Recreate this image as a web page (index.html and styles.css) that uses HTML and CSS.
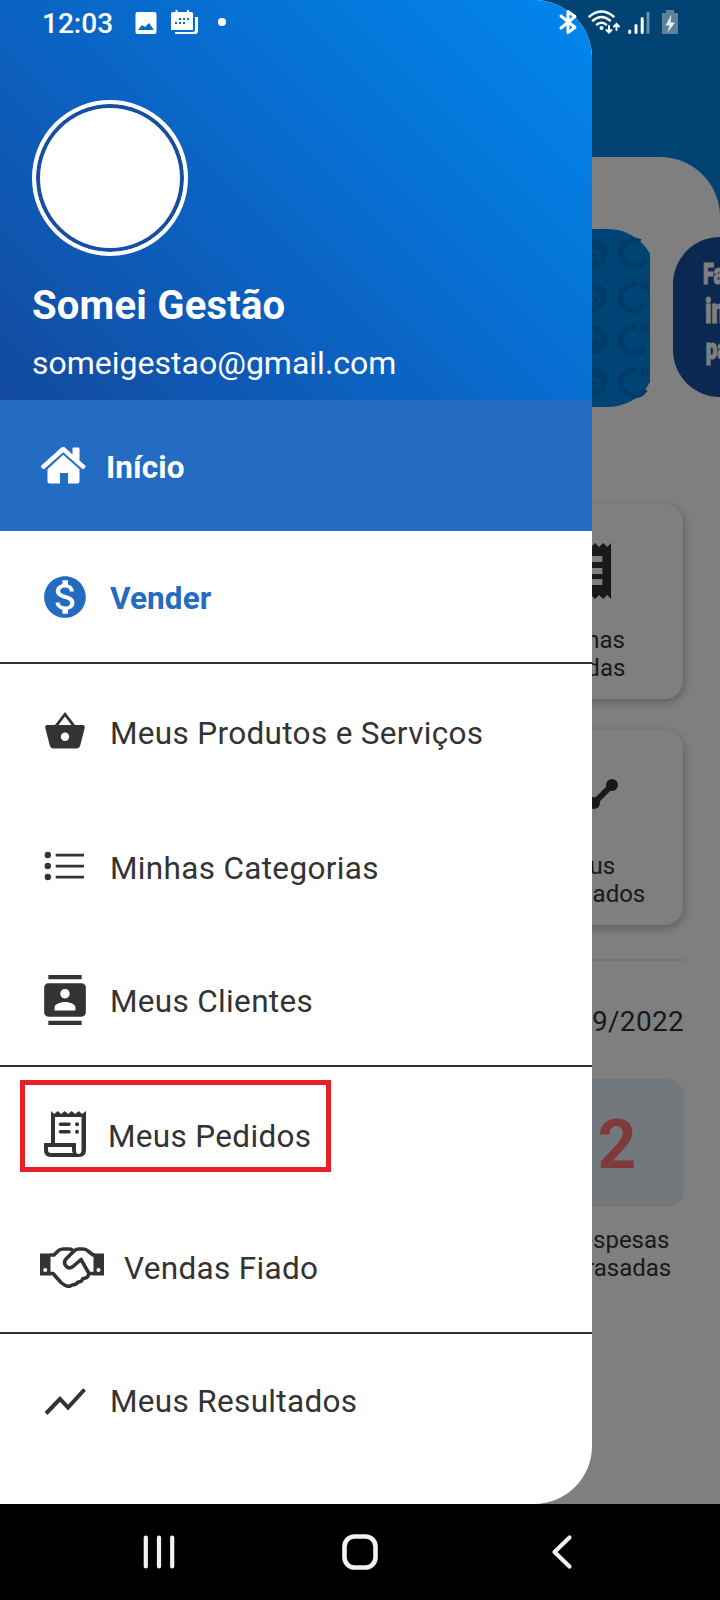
FILE: index.html
```html
<!DOCTYPE html>
<html lang="pt-BR">
<head>
<meta charset="utf-8">
<title>Somei Gestão</title>
<link rel="stylesheet" href="styles.css">
</head>
<body>
<div class="screen">
  <main class="home">
    <div class="sheet">
      <div class="banners">
        <div class="banner-slot">
          <svg class="banner" width="200" height="178" viewBox="456 229 200 178">
            <rect x="456" y="229" width="200" height="178" rx="48" fill="#0089ec"/>
            <g fill="none" stroke="#0078d4" stroke-width="6">
              <circle cx="592" cy="254" r="12"/><circle cx="592" cy="297" r="12"/><circle cx="592" cy="340" r="12"/><circle cx="592" cy="382" r="12"/>
              <path d="M645 260a13 13 0 1 1-5-18M645 304a13 13 0 1 1-8-19M645 347a13 13 0 1 1-8-19M645 389a13 13 0 1 1-8-19"/>
              <path d="M598 249c-8-6-14 3-6 5s3 10-6 5M598 292c-8-6-14 3-6 5s3 10-6 5M598 335c-8-6-14 3-6 5s3 10-6 5M598 377c-8-6-14 3-6 5s3 10-6 5" stroke-width="3"/>
            </g>
            <g fill="#0078d4"><circle cx="645" cy="286" r="5"/><circle cx="645" cy="329" r="5"/><circle cx="645" cy="372" r="5"/></g>
          </svg>
        </div>
        <div class="promo"><span class="p1">Fa</span><span class="p2">in</span><span class="p3">pa</span></div>
      </div>
      <div class="tiles">
        <section class="card">
          <svg width="50" height="58" viewBox="0 0 52 58" preserveAspectRatio="none"><path fill="#333" fill-rule="evenodd" d="M1 1l4 4 4.200-4 4.200 4 4.200-4 4.200 4 4.200-4 4.200 4 4.200-4 4.200 4 4.200-4 4.200 4 4-4v56l-4-4-4.200 4-4.200-4-4.200 4-4.200-4-4.200 4-4.200-4-4.200 4-4.200-4-4.200 4-4.200-4-4 4zM10 14v6h32v-6zM10 26v6h32v-6zM10 37v6h32v-6z"/></svg>
          <p>Minhas<br>Vendas</p>
        </section>
        <section class="card">
          <svg width="62" height="58" viewBox="0 3 62 58"><path d="M6 42l18-18 14 14 18-18" fill="none" stroke="#333" stroke-width="6"/><g fill="#333"><circle cx="6" cy="42" r="6"/><circle cx="24" cy="24" r="6"/><circle cx="38" cy="38" r="6"/><circle cx="56" cy="20" r="6"/></g></svg>
          <p>Meus<br>Resultados</p>
        </section>
      </div>
      <div class="rule"></div>
      <div class="date">09/2022</div>
      <div class="late"><div class="count">2</div><p>Despesas<br>Atrasadas</p></div>
    </div>
  </main>
  <div class="scrim"></div>

  <aside class="drawer">
    <header class="profile">
      <div class="avatar"></div>
      <div class="name">Somei Gestão</div>
      <div class="mail">someigestao@gmail.com</div>
    </header>
    <nav class="menu">
      <a class="item active">
        <svg class="icon" width="46" height="38" viewBox="-.500 .500 46 38" fill="currentColor"><path d="M20.600 1.300a3.200 3.200 0 0 1 4.200 0L32 8V2q0-1 1-1h5q1 0 1 1v12l5.600 5q1 1 0 2l-1 1.200q-1 .8-2 0L22.700 5.800 4 22.200q-1 .8-2 0L.9 21q-1-1 0-2z"/><path d="M22.700 8.300 39 22.800V35q0 2-2 2H27.500V26.500h-8V37H9q-2 0-2-2V22.800z"/></svg>
        <span>Início</span>
      </a>
      <a class="item sell">
        <svg class="icon" width="50" height="50" viewBox="0 0 24 24" fill="currentColor"><path d="M12 2C6.480 2 2 6.480 2 12s4.480 10 10 10 10-4.480 10-10S17.520 2 12 2zm1.410 16.090V20h-2.670v-1.930c-1.710-.36-3.160-1.460-3.270-3.400h1.960c.1 1.050.82 1.870 2.650 1.870 1.960 0 2.400-.98 2.400-1.590 0-.83-.44-1.610-2.670-2.140-2.480-.6-4.180-1.620-4.180-3.670 0-1.720 1.390-2.840 3.110-3.210V4h2.670v1.950c1.860.45 2.790 1.860 2.850 3.390H14.300c-.05-1.110-.64-1.870-2.220-1.870-1.500 0-2.400.68-2.400 1.640 0 .84.65 1.390 2.670 1.910s4.180 1.390 4.180 3.910c-.01 1.830-1.380 2.830-3.120 3.160z"/></svg>
        <span>Vender</span>
      </a>
      <hr>
      <a class="item">
        <svg class="icon" width="50" height="50" viewBox="0 0 50 50" fill="currentColor"><path fill-rule="evenodd" d="M7.500 19H15L25 6l10 13h7.500q2.800 0 2.200 3l-4.500 17.500Q39.400 42.500 36.500 42.500h-23Q10.600 42.500 9.800 39.500L5.300 22q-.6-3 2.200-3zM18.500 19h13L25 10.500zM25 26.500a4.200 4.200 0 1 0 0 8.400 4.200 4.200 0 0 0 0-8.400z"/></svg>
        <span>Meus Produtos e Serviços</span>
      </a>
      <a class="item categories">
        <svg class="icon" width="50" height="50" viewBox="0 0 50 50" fill="currentColor"><circle cx="7.800" cy="14" r="3.200"/><circle cx="7.800" cy="25" r="3.200"/><circle cx="7.800" cy="36" r="3.200"/><path d="M15.700 12.700H44v2.700H15.700zM15.700 23.700H44v2.700H15.700zM15.700 34.700H44v2.700H15.700z"/></svg>
        <span>Minhas Categorias</span>
      </a>
      <a class="item clients">
        <svg class="icon" width="50" height="50" viewBox="0 0 24 24" fill="currentColor"><path d="M20 0H4v2h16V0zM4 24h16v-2H4v2zM20 4H4c-1.100 0-2 .9-2 2v12c0 1.100.9 2 2 2h16c1.100 0 2-.9 2-2V6c0-1.100-.9-2-2-2zm-8 2.750c1.240 0 2.250 1.010 2.250 2.250s-1.010 2.250-2.250 2.250S9.750 10.240 9.750 9 10.760 6.750 12 6.750zM17 17H7v-1.500c0-1.670 3.330-2.500 5-2.500s5 .83 5 2.500V17z"/></svg>
        <span>Meus Clientes</span>
      </a>
      <hr>
      <a class="item orders">
        <svg class="icon" width="50" height="50" viewBox="0 1 50 50"><path d="M11 3l3.200 3 3.500-3 3.500 3 3.500-3 3.500 3 3.500-3 3.500 3 3.500-3 3.500 3L46 3v39q0 7-7 7H11q-7 0-7-7v-7h7zM15 9v26h21v8q0 3 2.500 3t3-3V9zM8 39v3q0 3 3 3h22q-1-1-1-3v-3z" fill="currentColor" fill-rule="evenodd"/><path d="M20.500 16.300h8.500M20.500 23.700h8.500" stroke="currentColor" stroke-width="3.500" stroke-linecap="round"/><circle cx="37" cy="16.300" r="2" fill="currentColor"/><circle cx="37" cy="23.700" r="2" fill="currentColor"/></svg>
        <span>Meus Pedidos</span>
        <i class="highlight"></i>
      </a>
      <a class="item credit">
        <svg class="icon" width="64" height="42" viewBox="0 -.500 64 42"><path fill="currentColor" fill-rule="evenodd" d="M0 7h10.500v22H0zM5.200 21.500a2 2 0 1 0 0 4 2 2 0 0 0 0-4zM53.500 7H64v22H53.500zM58.500 21.500a2 2 0 1 0 0 4 2 2 0 0 0 0-4z"/><path d="M10 8.500h4l4-4Q20 2.500 23 2.500h6q2 0 3.500 1M10 27h3l8 9q7 6 11 2.500 4 0 6-3 4 0 5-3.500 5 0 6-5L41 13l-4 3.500-4 3.500q-4 3-7-.5-3-3.500 0-7l7-7q2.500-3 6-3h4q3 0 5 2l5 4h2M49 27h5" fill="none" stroke="currentColor" stroke-width="3.600" stroke-linejoin="round"/></svg>
        <span>Vendas Fiado</span>
      </a>
      <hr>
      <a class="item results">
        <svg class="icon" width="50" height="50" viewBox="0 0 50 50"><path d="M6 38.500 20 24l8 8.500 16.500-18" fill="none" stroke="currentColor" stroke-width="4"/></svg>
        <span>Meus Resultados</span>
      </a>
    </nav>
  </aside>

  <div class="status">
    <span class="clock">12:03</span>
    <svg class="left-icons" width="94" height="26" viewBox="133 9 94 26" fill="#fff">
      <path fill-rule="evenodd" d="M137.500 12h17q2 0 2 2v18q0 2-2 2h-17q-2 0-2-2V14q0-2 2-2zM138 30h16l-5-7-4 4-3-2z"/>
      <path fill-rule="evenodd" d="M173 12h2.500v-2h2v2h9.500v-2h2v2h2.500q1.500 0 1.500 1.500V30h-22V13.500q0-1.500 2-1.500zm6 6v2h2v-2zm4 0v2h2v-2zm4 0v2h2v-2zm-12 4v2h2v-2zm4 0v2h2v-2zm4 0v2h2v-2z"/>
      <path d="M195 17h3v14q0 3-3 3h-20v-2h18q2 0 2-2z"/>
      <circle cx="222" cy="22" r="4"/>
    </svg>
    <svg class="right-icons" width="122" height="26" viewBox="558 9 122 26">
      <path d="M561 16l14 11.500-7 5v-21l7 5L561 28" fill="none" stroke="#fff" stroke-width="3" stroke-linejoin="round" stroke-linecap="round"/>
      <g fill="none" stroke="#fff" stroke-width="2.500" stroke-linecap="round"><path d="M589.500 16.500q12-10 24 0M593 20.500q8.500-7 17 0M597 24.500q4.500-3.500 9 0"/><path d="M609 26v6M606.500 30l2.500 2.500 2.500-2.500M616.500 30v-5M614 26.500l2.500-2.500 2.500 2.500" stroke-width="2"/></g>
      <circle cx="601.500" cy="28" r="2" fill="#fff"/>
      <g stroke="#fff" stroke-width="3" stroke-linecap="round"><path d="M629.700 31v1.500M636 25.500v7M642.200 18.500v14"/><path d="M648 13v19.500" opacity=".4"/></g>
      <path d="M666 10h8v3h4v21h-16V13h4z" fill="#5f8099"/><path d="M671.500 14.500l-6 11h4l-2 7 7.500-10h-4.500z" fill="#e6eef2"/>
    </svg>
  </div>

  <footer class="navbar">
    <svg width="34" height="36" viewBox="0 0 34 36" stroke="#f2f2f2" stroke-width="4.200" stroke-linecap="round"><path d="M3.800 3.500v29M17 3.500v29M30.200 3.500v29"/></svg>
    <svg width="36" height="36" viewBox="0 0 36 36" fill="none" stroke="#f2f2f2" stroke-width="4.600"><rect x="2.500" y="2.500" width="31" height="31" rx="10"/></svg>
    <svg width="34" height="36" viewBox="0 0 34 36" fill="none" stroke="#f2f2f2" stroke-width="4.200" stroke-linecap="round" stroke-linejoin="round"><path d="M25.500 3.500 10.500 18l15 14.500"/></svg>
  </footer>
</div>
</body>
</html>
```
FILE: styles.css
```css
* { box-sizing: border-box; }
body { margin: 0; font-family: Roboto, "Liberation Sans", sans-serif; }
p { margin: 0; }
.screen { position: relative; width: 720px; height: 1600px; overflow: hidden; display: flex; flex-direction: column; }

/* Home page behind the drawer */
.home { height: 1504px; padding-top: 157px; background: #0087e6; color: #333; }
.sheet { height: 1347px; padding: 72px 36px 0 0; background: #fff; border-top-right-radius: 60px; display: flex; flex-direction: column; align-items: flex-end; }
.banners { display: flex; align-items: flex-start; gap: 23px; height: 178px; margin-right: -36px; }
.banner-slot { width: 194px; height: 178px; overflow: hidden; }
.banner { display: block; }
.promo { width: 47px; height: 160px; margin-top: 8px; padding: 20px 0 0 30px; background: #1450a2; border-radius: 48px 0 0 48px; color: #fff; font-weight: 900; display: flex; flex-direction: column; -webkit-text-stroke: 1px #fff; }
.promo span { transform: scaleX(.68); transform-origin: left; width: 60px; }
.p1 { font-size: 29px; line-height: 35px; }
.p2 { font-size: 35px; line-height: 39px; padding-left: 3px; }
.p3 { font-size: 30px; line-height: 36px; padding-left: 4px; }
.tiles { display: flex; flex-direction: column; gap: 31px; margin-top: 97px; }
.card { width: 192px; height: 195px; margin-right: 1px; padding-top: 38px; border-radius: 18px; background: #fff; box-shadow: 1px 3px 10px rgba(0,0,0,.28); display: flex; flex-direction: column; align-items: center; gap: 26px; }
.card p, .late p { text-align: center; font-size: 24px; line-height: 28px; }
.card p { margin-right: 3px; }
.rule { width: 400px; height: 2px; margin-top: 34px; background: #e8e8e8; }
.date { margin-top: 44px; font-size: 28px; line-height: 34px; letter-spacing: .3px; }
.late { width: 134px; margin-top: 40px; }
.count { height: 128px; border-radius: 16px; background: #e4f1f7; color: #ff7476; font-size: 68px; line-height: 133px; font-weight: 700; text-align: center; }
.late p { margin-top: 19px; }
.scrim { position: absolute; left: 0; top: 0; width: 720px; height: 1504px; background: rgba(0,0,0,.5); }

/* Drawer */
.drawer { position: absolute; left: 0; top: 0; width: 592px; height: 1504px; background: #fff; border-radius: 0 58px 58px 0; overflow: hidden; }
.profile { height: 400px; padding: 100px 32px 0; color: #fff; background: linear-gradient(45deg, #134a9e 0%, #0c5fbe 36%, #0573d7 67%, #0287ed 100%); }
.avatar { width: 156px; height: 156px; border: 4px solid #fff; border-radius: 50%; background: #fff; box-shadow: inset 0 0 0 4px #174ea4; }
.name { margin-top: 27px; font-size: 40px; line-height: 46px; font-weight: 700; letter-spacing: .2px; }
.mail { margin-top: 15px; font-size: 32px; line-height: 38px; }
.item { position: relative; height: 134px; padding-left: 40px; display: flex; align-items: center; gap: 20px; color: #333; font-size: 31.500px; letter-spacing: .33px; }
.item span { padding-top: 4px; }
.icon { flex: none; display: block; }
.menu hr { height: 2px; margin: 0; border: 0; background: #333; }
.active, .sell { height: 131px; font-weight: 700; letter-spacing: .1px; }
.active { background: #236cc2; color: #fff; }
.sell { color: #236cc2; }
.categories { height: 136px; }
.clients { height: 131px; }
.orders { height: 134px; gap: 18px; }
.credit { height: 131px; }
.results { height: 131px; }
.highlight { position: absolute; left: 20px; top: 13px; width: 311px; height: 92px; border: 5px solid #e71f27; }

/* System bars */
.status { position: absolute; left: 0; top: 0; width: 720px; height: 44px; padding: 9px 40px 0 42px; display: flex; color: #fff; }
.clock { width: 91px; font-size: 28px; line-height: 29px; font-weight: 500; }
.right-icons { margin-left: auto; }
.navbar { height: 96px; padding: 0 142px; background: #000; display: flex; align-items: center; justify-content: space-between; }
```
